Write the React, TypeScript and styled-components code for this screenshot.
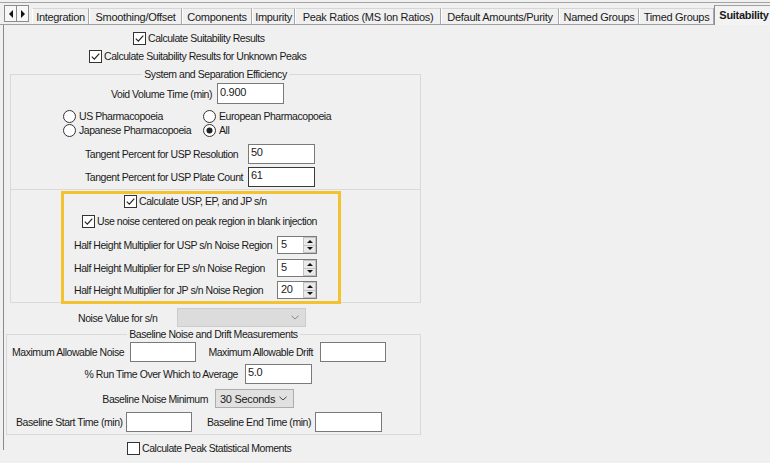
import React from 'react';
import styled, { createGlobalStyle } from 'styled-components';

const GlobalStyle = createGlobalStyle`
  html, body {
    margin: 0;
    padding: 0;
    background: #f0f0f0;
  }
  body {
    font-family: "Liberation Sans", Arial, sans-serif;
    color: #1a1a1a;
  }
`;

const Window = styled.div`
  width: 770px;
  height: 463px;
  overflow: hidden;
  background: #f0f0f0;
  font-size: 10.5px;
  letter-spacing: -0.45px;
`;

/* ---------- tabs ---------- */

const TabStrip = styled.div`
  display: flex;
  align-items: flex-end;
  height: 21px;
  margin-top: 2px;
  padding-left: 4px;
  border-top: 1px solid #a4a4a4;
  border-bottom: 1px solid #a0a0a0;
`;

const ScrollArrows = styled.div`
  display: flex;
  align-self: flex-start;
  margin-top: 2px;
  margin-right: 3px;
`;

const ArrowButton = styled.span`
  box-sizing: border-box;
  width: 13px;
  height: 17px;
  border: 1px solid #8c8c8c;
  background: #f7f7f7;
  display: flex;
  align-items: center;
  justify-content: center;

  & + & {
    margin-left: -1px;
  }
`;

const Tab = styled.div<{ $w: number; $active?: boolean }>`
  box-sizing: border-box;
  flex: none;
  width: ${({ $w }) => $w}px;
  height: ${({ $active }) => ($active ? 20 : 16)}px;
  margin-bottom: ${({ $active }) => ($active ? -1 : 0)}px;
  display: flex;
  align-items: center;
  justify-content: center;
  font-size: 11px;
  letter-spacing: -0.3px;
  white-space: nowrap;
  background: ${({ $active }) => ($active ? '#f3f3f3' : '#f0f0f0')};
  border-top: 1px solid ${({ $active }) => ($active ? '#a0a0a0' : '#d6d6d6')};
  border-left: 1px solid ${({ $active }) => ($active ? '#8c8c8c' : '#ffffff')};
  border-right: 1px solid ${({ $active }) => ($active ? 'transparent' : '#a8a8a8')};
  font-weight: ${({ $active }) => ($active ? 700 : 400)};
  padding-bottom: ${({ $active }) => ($active ? 2 : 0)}px;
`;

/* ---------- page body ---------- */

const Panel = styled.div`
  display: flex;
  flex-direction: column;
  margin-left: 3px;
  height: 425px;
  border-left: 1px solid #8a8a8a;
`;

const Row = styled.div<{ $top: number; $pad?: number; $h: number }>`
  display: flex;
  align-items: center;
  flex: none;
  height: ${({ $h }) => $h}px;
  margin-top: ${({ $top }) => $top}px;
  padding-left: ${({ $pad }) => $pad ?? 0}px;
`;

const Label = styled.span<{ $w: number; $right?: boolean; $gap?: number }>`
  box-sizing: border-box;
  flex: none;
  width: ${({ $w }) => $w}px;
  padding-right: ${({ $gap }) => $gap ?? 0}px;
  text-align: ${({ $right }) => ($right ? 'right' : 'left')};
  white-space: nowrap;
`;

const TextBox = styled.input<{ $w: number; $h: number; $focus?: boolean }>`
  box-sizing: border-box;
  flex: none;
  width: ${({ $w }) => $w}px;
  height: ${({ $h }) => $h}px;
  margin: 0;
  padding: 0 2px 4px 2px;
  border: 1px solid ${({ $focus }) => ($focus ? '#3a3a3a' : '#7a7a7a')};
  border-radius: 0;
  background: #fff;
  font-family: inherit;
  font-size: 11px;
  letter-spacing: -0.3px;
  color: #1a1a1a;
  outline: none;
`;

const Group = styled.fieldset<{ $top: number; $left: number; $w: number }>`
  box-sizing: border-box;
  flex: none;
  min-width: 0;
  width: ${({ $w }) => $w}px;
  margin: ${({ $top }) => $top}px 0 0 ${({ $left }) => $left}px;
  padding: 0 0 2px 0;
  border: 1px solid #d9d9d9;
`;

const GroupTitle = styled.legend`
  margin: 0 auto;
  padding: 0 2px;
  line-height: 12px;
  height: 12px;
`;

const PlainGroup = styled.div`
  box-sizing: border-box;
  flex: none;
  width: 411px;
  margin-left: 6px;
  padding-top: 1px;
  border: 1px solid #d9d9d9;
  border-top: none;
`;

const Highlight = styled.div`
  box-sizing: border-box;
  width: 280px;
  margin-left: 50px;
  margin-bottom: -2px;
  padding-bottom: 2px;
  border: 3px solid #f2c230;
  position: relative;
`;

const Box = styled.span`
  box-sizing: border-box;
  flex: none;
  width: 13px;
  height: 13px;
  border: 1px solid #333;
  background: #fff;
  display: flex;
  align-items: center;
  justify-content: center;
  margin-right: 2px;
`;

const RadioCircle = styled.span`
  box-sizing: border-box;
  flex: none;
  width: 13px;
  height: 13px;
  border: 1px solid #333;
  border-radius: 50%;
  background: #fff;
  display: flex;
  align-items: center;
  justify-content: center;
  margin-right: 3px;
`;

const RadioGrid = styled.div`
  display: grid;
  grid-template-columns: 140px auto;
  grid-auto-rows: 14px;
  margin-top: 5px;
  padding-left: 52px;
`;

const RadioItem = styled.div`
  display: flex;
  align-items: center;
  white-space: nowrap;
`;

const Spin = styled.div`
  box-sizing: border-box;
  flex: none;
  display: flex;
  width: 40px;
  height: 18px;
  border: 1px solid #7a7a7a;
  background: #fff;
`;

const SpinValue = styled.span`
  flex: 1;
  padding: 1px 3px 0;
  font-size: 11px;
  letter-spacing: -0.3px;
  line-height: 13px;
`;

const SpinButtons = styled.div`
  display: flex;
  flex-direction: column;
  width: 13px;
  margin: 0 0 0 1px;
`;

const SpinButton = styled.span`
  flex: 1;
  box-sizing: border-box;
  display: flex;
  align-items: center;
  justify-content: center;
  background: #e9e9e9;
  border: 1px solid #c2c2c2;

  & + & {
    border-top: none;
  }
`;

const Select = styled.div<{ $w: number; $disabled?: boolean }>`
  box-sizing: border-box;
  flex: none;
  display: flex;
  align-items: center;
  justify-content: space-between;
  width: ${({ $w }) => $w}px;
  height: 19px;
  padding: 0 6px 0 4px;
  border: 1px solid ${({ $disabled }) => ($disabled ? '#cccccc' : '#adadad')};
  background: ${({ $disabled }) => ($disabled ? '#dcdcdc' : '#e1e1e1')};
  font-size: 11px;
  letter-spacing: -0.3px;
  white-space: nowrap;
`;

/* ---------- small drawings ---------- */

const Check = ({ on }: { on: boolean }) => (
  <Box>
    {on && (
      <svg width="11" height="11" viewBox="0 0 11 11">
        <polyline points="1.8,5.6 4.3,8.1 9.3,2.6" fill="none" stroke="#222" strokeWidth="1.2" />
      </svg>
    )}
  </Box>
);

const CheckItem = ({ on, text }: { on: boolean; text: string }) => (
  <>
    <Check on={on} />
    <span style={{ whiteSpace: 'nowrap' }}>{text}</span>
  </>
);

const Radio = ({ on, text }: { on: boolean; text: string }) => (
  <RadioItem>
    <RadioCircle>
      {on && (
        <svg width="7" height="7" viewBox="0 0 7 7">
          <circle cx="3.5" cy="3.5" r="3" fill="#222" />
        </svg>
      )}
    </RadioCircle>
    {text}
  </RadioItem>
);

const Chevron = ({ color }: { color: string }) => (
  <svg width="8" height="5" viewBox="0 0 8 5">
    <polyline points="0.5,0.8 4,4 7.5,0.8" fill="none" stroke={color} strokeWidth="1" />
  </svg>
);

const Triangle = ({ dir }: { dir: 'left' | 'right' | 'up' | 'down' }) => {
  const pts = {
    left: '5,0 5,8 1,4',
    right: '1,0 1,8 5,4',
    up: '0,4 3,1 6,4',
    down: '0,1 3,4 6,1',
  }[dir];
  const small = dir === 'up' || dir === 'down';
  return (
    <svg width={small ? 6 : 6} height={small ? 5 : 8} viewBox={small ? '0 0 6 5' : '0 0 6 8'}>
      <polygon points={pts} fill="#111" />
    </svg>
  );
};

const SpinBox = ({ value }: { value: string }) => (
  <Spin>
    <SpinValue>{value}</SpinValue>
    <SpinButtons>
      <SpinButton>
        <Triangle dir="up" />
      </SpinButton>
      <SpinButton>
        <Triangle dir="down" />
      </SpinButton>
    </SpinButtons>
  </Spin>
);

const tabs = [
  { label: 'Integration', w: 57 },
  { label: 'Smoothing/Offset', w: 93 },
  { label: 'Components', w: 70 },
  { label: 'Impurity', w: 43 },
  { label: 'Peak Ratios (MS Ion Ratios)', w: 146 },
  { label: 'Default Amounts/Purity', w: 118 },
  { label: 'Named Groups', w: 80 },
  { label: 'Timed Groups', w: 75 },
];

const multipliers = [
  { label: 'Half Height Multiplier for USP s/n Noise Region', value: '5', top: 8 },
  { label: 'Half Height Multiplier for EP s/n Noise Region', value: '5', top: 5 },
  { label: 'Half Height Multiplier for JP s/n Noise Region', value: '20', top: 4 },
];

export default function App() {
  return (
    <>
      <GlobalStyle />
      <Window>
        <TabStrip>
          <ScrollArrows>
            <ArrowButton>
              <Triangle dir="left" />
            </ArrowButton>
            <ArrowButton>
              <Triangle dir="right" />
            </ArrowButton>
          </ScrollArrows>
          {tabs.map((t) => (
            <Tab key={t.label} $w={t.w}>
              {t.label}
            </Tab>
          ))}
          <Tab $w={60} $active>
            Suitability
          </Tab>
        </TabStrip>

        <Panel>
          <Row $top={6} $pad={129} $h={14}>
            <CheckItem on text="Calculate Suitability Results" />
          </Row>
          <Row $top={4} $pad={85} $h={14}>
            <CheckItem on text="Calculate Suitability Results for Unknown Peaks" />
          </Row>

          <Group $top={5} $left={6} $w={411}>
            <GroupTitle>System and Separation Efficiency</GroupTitle>
            <Row $top={3} $h={21}>
              <Label $w={206} $right $gap={5}>
                Void Volume Time (min)
              </Label>
              <TextBox $w={67} $h={21} readOnly defaultValue="0.900" />
            </Row>
            <RadioGrid>
              <Radio on={false} text="US Pharmacopoeia" />
              <Radio on={false} text="European Pharmacopoeia" />
              <Radio on={false} text="Japanese Pharmacopoeia" />
              <Radio on text="All" />
            </RadioGrid>
            <Row $top={7} $pad={74} $h={20}>
              <Label $w={163}>Tangent Percent for USP Resolution</Label>
              <TextBox $w={67} $h={20} readOnly defaultValue="50" />
            </Row>
            <Row $top={3} $pad={74} $h={20}>
              <Label $w={163}>Tangent Percent for USP Plate Count</Label>
              <TextBox $w={67} $h={20} $focus readOnly defaultValue="61" />
            </Row>
          </Group>

          <PlainGroup>
            <Highlight>
              <Row $top={0} $pad={60} $h={14}>
                <CheckItem on text="Calculate USP, EP, and JP s/n" />
              </Row>
              <Row $top={6} $pad={18} $h={14}>
                <CheckItem on text="Use noise centered on peak region in blank injection" />
              </Row>
              {multipliers.map((m) => (
                <Row key={m.label} $top={m.top} $pad={10} $h={18}>
                  <Label $w={203}>{m.label}</Label>
                  <SpinBox value={m.value} />
                </Row>
              ))}
            </Highlight>
          </PlainGroup>

          <Row $top={5} $pad={74} $h={19}>
            <Label $w={99}>Noise Value for s/n</Label>
            <Select $w={129} $disabled>
              <span />
              <Chevron color="#8a8a8a" />
            </Select>
          </Row>

          <Group $top={1} $left={2} $w={415}>
            <GroupTitle>Baseline Noise and Drift Measurements</GroupTitle>
            <Row $top={2} $pad={5} $h={20}>
              <Label $w={118}>Maximum Allowable Noise</Label>
              <TextBox $w={66} $h={20} readOnly defaultValue="" />
              <Label $w={124} $right $gap={7}>
                Maximum Allowable Drift
              </Label>
              <TextBox $w={66} $h={20} readOnly defaultValue="" />
            </Row>
            <Row $top={2} $h={20}>
              <Label $w={238} $right $gap={7}>
                % Run Time Over Which to Average
              </Label>
              <TextBox $w={67} $h={20} readOnly defaultValue="5.0" />
            </Row>
            <Row $top={5} $h={19}>
              <Label $w={208} $right $gap={7}>
                Baseline Noise Minimum
              </Label>
              <Select $w={79}>
                <span>30 Seconds</span>
                <Chevron color="#444" />
              </Select>
            </Row>
            <Row $top={4} $pad={9} $h={20}>
              <Label $w={110}>Baseline Start Time (min)</Label>
              <TextBox $w={66} $h={20} readOnly defaultValue="" />
              <Label $w={123} $right $gap={4}>
                Baseline End Time (min)
              </Label>
              <TextBox $w={67} $h={20} readOnly defaultValue="" />
            </Row>
          </Group>

          <Row $top={6} $pad={123} $h={14}>
            <CheckItem on={false} text="Calculate Peak Statistical Moments" />
          </Row>
        </Panel>
      </Window>
    </>
  );
}
